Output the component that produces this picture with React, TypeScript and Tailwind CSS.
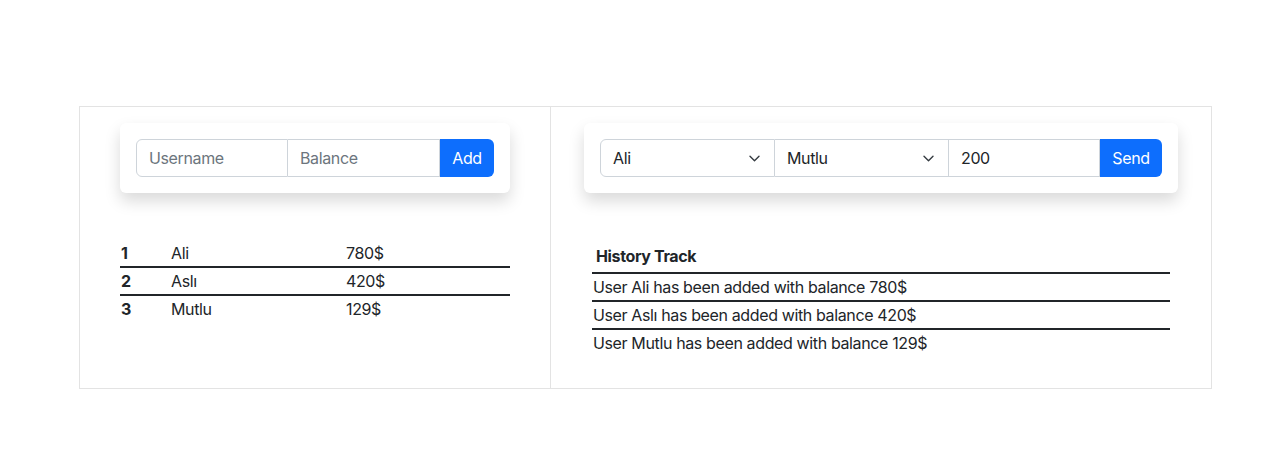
const users = [
  { id: 1, name: 'Ali', balance: 780 },
  { id: 2, name: 'Aslı', balance: 420 },
  { id: 3, name: 'Mutlu', balance: 129 },
];

function Chevron() {
  return (
    <svg width="11" height="7" viewBox="0 0 11 7" className="shrink-0">
      <path
        d="M1 1.2l4.5 4.5 4.5-4.5"
        fill="none"
        stroke="#343a40"
        strokeWidth="1.4"
        strokeLinecap="round"
        strokeLinejoin="round"
      />
    </svg>
  );
}

function SelectBox({ value, rounded }: { value: string; rounded?: boolean }) {
  return (
    <div
      className={
        rounded
          ? 'flex items-center justify-between h-full border border-[#ced4da] rounded-l-[6px] pl-3 pr-[14px] w-[175px]'
          : 'flex items-center justify-between h-full border border-[#ced4da] border-l-0 pl-3 pr-[14px] w-[174px]'
      }
    >
      <span>{value}</span>
      <Chevron />
    </div>
  );
}

export default function App() {
  return (
    <div
      className="w-[1280px] h-[472px] bg-white text-[#212529] text-[16px] tracking-[-0.37px] pt-[106px]"
      style={{ fontFamily: 'Inter, "Liberation Sans", sans-serif' }}
    >
      <div className="ml-[79px] w-[1133px] h-[283px] border border-[#e3e3e3] flex">
        {/* 사용자 추가 */}
        <div className="w-[471px] border-r border-[#e3e3e3] pt-4 pl-10">
          <div className="w-[390px] bg-white rounded-[6px] p-4 shadow-[0_8px_16px_rgba(0,0,0,0.15)]">
            <div className="flex h-[38px]">
              <div className="w-[152px] border border-[#ced4da] rounded-l-[6px] flex items-center px-3 text-[#6c757d]">
                Username
              </div>
              <div className="w-[152px] border border-l-0 border-[#ced4da] flex items-center px-3 text-[#6c757d]">
                Balance
              </div>
              <button className="w-[54px] bg-[#0d6efd] text-white rounded-r-[6px]">
                Add
              </button>
            </div>
          </div>

          <div className="mt-[47px] w-[390px]">
            {users.map((u, i) => (
              <div
                key={u.id}
                className={
                  i < users.length - 1
                    ? 'flex items-center h-[28px] border-b-2 border-[#212529]'
                    : 'flex items-center h-[26px]'
                }
              >
                <span className="w-[51px] pl-[1px] font-bold">{u.id}</span>
                <span className="w-[175px]">{u.name}</span>
                <span>{u.balance}$</span>
              </div>
            ))}
          </div>
        </div>

        {/* 송금 */}
        <div className="flex-1 pt-4 pl-[33px]">
          <div className="w-[594px] bg-white rounded-[6px] p-4 shadow-[0_8px_16px_rgba(0,0,0,0.15)]">
            <div className="flex h-[38px]">
              <SelectBox value="Ali" rounded />
              <SelectBox value="Mutlu" />
              <div className="w-[151px] border border-l-0 border-[#ced4da] flex items-center px-3">
                200
              </div>
              <button className="w-[62px] bg-[#0d6efd] text-white rounded-r-[6px]">
                Send
              </button>
            </div>
          </div>

          <div className="mt-[47px] ml-2 w-[578px]">
            <div className="h-[34px] flex items-center border-b-2 border-[#212529] pl-1 font-bold">
              History Track
            </div>
            {users.map((u, i) => (
              <div
                key={u.id}
                className={
                  i < users.length - 1
                    ? 'h-[28px] flex items-center border-b-2 border-[#212529] pl-[1px]'
                    : 'h-[26px] flex items-center pl-[1px]'
                }
              >
                User {u.name} has been added with balance {u.balance}$
              </div>
            ))}
          </div>
        </div>
      </div>
    </div>
  );
}
